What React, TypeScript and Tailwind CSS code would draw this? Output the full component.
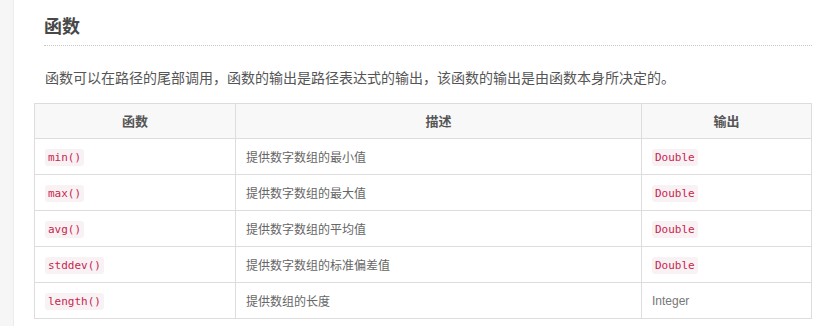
const rows = [
  { name: "min()", desc: "提供数字数组的最小值", out: "Double", code: true },
  { name: "max()", desc: "提供数字数组的最大值", out: "Double", code: true },
  { name: "avg()", desc: "提供数字数组的平均值", out: "Double", code: true },
  { name: "stddev()", desc: "提供数字数组的标准偏差值", out: "Double", code: true },
  { name: "length()", desc: "提供数组的长度", out: "Integer", code: false },
]

const Code = ({ children }: { children: string }) => (
  <code className="inline-block rounded-[3px] bg-[#f9f2f4] px-[3px] py-[2px] font-['DejaVu_Sans_Mono','Liberation_Mono',monospace] text-[11px] leading-[13px] text-[#c7254e]">
    {children}
  </code>
)

const App = () => {
  return (
    <div className="flex h-[326px] w-[832px] overflow-hidden bg-white font-['Noto_Sans_CJK_SC','Liberation_Sans',sans-serif]">
      <div className="w-[14px] shrink-0 border-r border-[#ececec] bg-[#f6f6f6]"></div>
      <div className="flex-1 pl-[20px] pr-[20px] pt-[12px]">
        <h2 className="ml-[10px] border-b border-dotted border-[#c8c8c8] pb-[6px] text-[18px] font-bold leading-[27px] text-[#484848]">
          函数
        </h2>
        <p className="ml-[11px] mt-[20px] text-[14px] leading-[22px] text-[#555]">
          函数可以在路径的尾部调用，函数的输出是路径表达式的输出，该函数的输出是由函数本身所决定的。
        </p>
        <table className="mt-[15px] w-[778px] border-collapse border border-[#ddd] text-[12px]">
          <thead>
            <tr className="h-[35px] bg-[#f8f8f8]">
              <th className="w-[201px] border border-[#ddd] text-[13px] font-bold text-[#555]">函数</th>
              <th className="w-[406px] border border-[#ddd] text-[13px] font-bold text-[#555]">描述</th>
              <th className="border border-[#ddd] text-[13px] font-bold text-[#555]">输出</th>
            </tr>
          </thead>
          <tbody>
            {rows.map((r) => (
              <tr key={r.name} className="h-[36px]">
                <td className="border border-[#ddd] px-[10px]">
                  <Code>{r.name}</Code>
                </td>
                <td className="border border-[#ddd] px-[10px] text-[#666]">{r.desc}</td>
                <td className="border border-[#ddd] px-[10px]">
                  {r.code ? (
                    <Code>{r.out}</Code>
                  ) : (
                    <span className="font-['Liberation_Sans',sans-serif] text-[12px] text-[#777]">{r.out}</span>
                  )}
                </td>
              </tr>
            ))}
          </tbody>
        </table>
      </div>
    </div>
  )
}

export default App
